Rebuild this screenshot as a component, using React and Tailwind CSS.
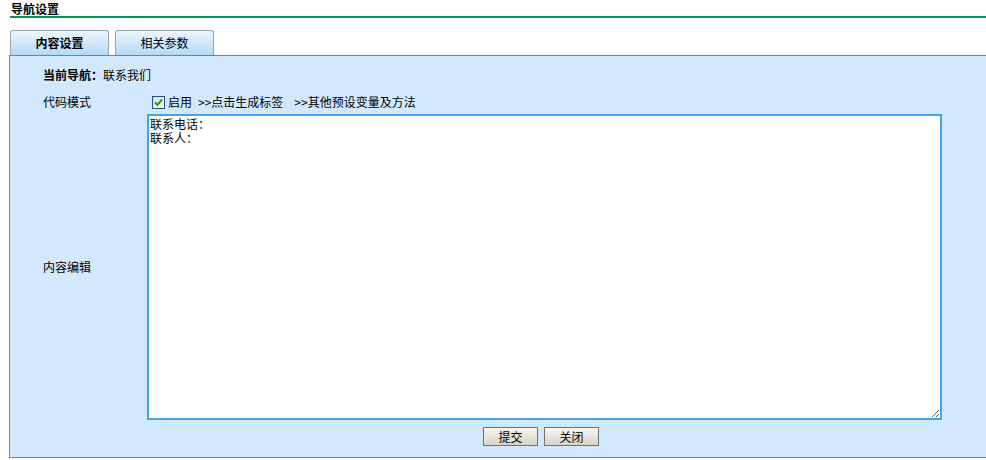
import React from "react";

const font = { fontFamily: '"Noto Sans CJK SC", "Liberation Sans", sans-serif' };

export default function App() {
  return (
    <div className="w-[986px] h-[460px] bg-white text-[12px] text-black overflow-hidden" style={font}>
      <div className="pl-[10px]">
        <div className="h-[18px] pl-[1px] pt-[2px] font-bold text-[12px] leading-[14px] border-b-2 border-[#0b8f5f]">导航设置</div>
      </div>
      <div className="pl-[9px] pt-[12px]">
        <div className="flex items-end h-[25px] pl-[1px] gap-[6px]">
          <div className="w-[99px] h-[25px] rounded-t-[3px] border border-b-0 border-[#97a4ae] bg-gradient-to-b from-[#eef6fd] to-[#b3d9f7] flex items-center justify-center font-bold">内容设置</div>
          <div className="w-[99px] h-[25px] rounded-t-[3px] border border-b-0 border-[#97a4ae] bg-gradient-to-b from-[#eef6fd] to-[#b3d9f7] flex items-center justify-center">相关参数</div>
        </div>
        <div className="h-[403px] bg-[#d2e8fc] border-l border-t border-b border-[#808080] flex flex-col">
          <div className="h-[35px] pl-[33px] flex items-center pt-[2px]">
            <span className="font-bold">当前导航：</span>
            <span>联系我们</span>
          </div>
          <div className="flex h-[23px] items-center pl-[33px] pb-[1px]">
            <div className="w-[104px]">代码模式</div>
            <div className="flex items-center">
              <span className="ml-[5px] w-[13px] h-[13px] border border-[#1c5180] bg-gradient-to-br from-[#dcdcd7] to-white flex items-center justify-center">
                <svg width="9" height="9" viewBox="0 0 9 9">
                  <path d="M1 4.5 L3.5 7 L8 1.5" stroke="#21a121" strokeWidth="2" fill="none" />
                </svg>
              </span>
              <span className="ml-[3px]">启用</span>
              <span className="ml-[6px]">&gt;&gt;点击生成标签</span>
              <span className="ml-[11px]">&gt;&gt;其他预设变量及方法</span>
            </div>
          </div>
          <div className="flex h-[306px] pl-[33px]">
            <div className="w-[104px] flex items-center">内容编辑</div>
            <textarea
              className="w-[795px] h-[306px] border-2 border-[#45a3ec] bg-white px-[1px] py-[1px] text-[12px] leading-[14px] outline-none resize"
              style={font}
              defaultValue={"联系电话：\n联系人："}
            />
          </div>
          <div className="flex pl-[473px] pt-[7px] gap-[6px]">
            <button className="w-[55px] h-[19px] border border-[#707070] bg-gradient-to-b from-[#f8f7f2] to-[#d8d4c4] flex items-center justify-center text-[12px] leading-none">提交</button>
            <button className="w-[55px] h-[19px] border border-[#707070] bg-gradient-to-b from-[#f8f7f2] to-[#d8d4c4] flex items-center justify-center text-[12px] leading-none">关闭</button>
          </div>
        </div>
      </div>
    </div>
  );
}
